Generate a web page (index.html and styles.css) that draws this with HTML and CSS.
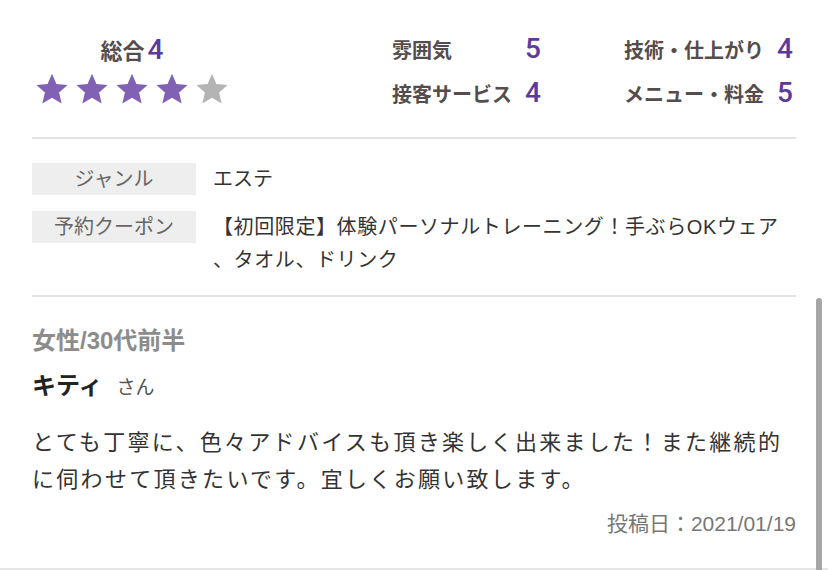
FILE: index.html
```html
<!DOCTYPE html>
<html lang="ja">
<head>
<meta charset="utf-8">
<link rel="stylesheet" href="styles.css">
</head>
<body>
<div class="card">
  <section class="summary">
    <div class="overall">
      <div class="overall-title"><span class="overall-label">総合</span><span class="overall-num">4</span></div>
      <div class="stars">
        <svg class="star on" viewBox="0 0 24 24"><polygon points="12,1.2 15.1,8.5 23,9.2 17,14.4 18.8,22.2 12,18.1 5.2,22.2 7,14.4 1,9.2 8.9,8.5"/></svg>
        <svg class="star on" viewBox="0 0 24 24"><polygon points="12,1.2 15.1,8.5 23,9.2 17,14.4 18.8,22.2 12,18.1 5.2,22.2 7,14.4 1,9.2 8.9,8.5"/></svg>
        <svg class="star on" viewBox="0 0 24 24"><polygon points="12,1.2 15.1,8.5 23,9.2 17,14.4 18.8,22.2 12,18.1 5.2,22.2 7,14.4 1,9.2 8.9,8.5"/></svg>
        <svg class="star on" viewBox="0 0 24 24"><polygon points="12,1.2 15.1,8.5 23,9.2 17,14.4 18.8,22.2 12,18.1 5.2,22.2 7,14.4 1,9.2 8.9,8.5"/></svg>
        <svg class="star off" viewBox="0 0 24 24"><polygon points="12,1.2 15.1,8.5 23,9.2 17,14.4 18.8,22.2 12,18.1 5.2,22.2 7,14.4 1,9.2 8.9,8.5"/></svg>
      </div>
    </div>
    <div class="scores">
      <span class="score-label">雰囲気</span><span class="score-num">5</span>
      <span class="score-label">技術・仕上がり</span><span class="score-num">4</span>
      <span class="score-label">接客サービス</span><span class="score-num">4</span>
      <span class="score-label">メニュー・料金</span><span class="score-num">5</span>
    </div>
  </section>

  <section class="info">
    <div class="info-row">
      <div class="info-label">ジャンル</div>
      <div class="info-value">エステ</div>
    </div>
    <div class="info-row">
      <div class="info-label">予約クーポン</div>
      <div class="info-value coupon">【初回限定】体験パーソナルトレーニング！手ぶらOKウェア<br>、タオル、ドリンク</div>
    </div>
  </section>

  <section class="review">
    <div class="reviewer-meta">女性/30代前半</div>
    <div class="reviewer-name">キティ<span class="honorific">さん</span></div>
    <p class="review-text">とても丁寧に、色々アドバイスも頂き楽しく出来ました！また継続的<br>に伺わせて頂きたいです。宜しくお願い致します。</p>
    <div class="review-date">投稿日：2021/01/19</div>
  </section>
</div>
<div class="scroll-indicator"></div>
</body>
</html>
```

FILE: styles.css
```css
* { box-sizing: border-box; }

html, body {
  margin: 0;
  padding: 0;
  background: #ffffff;
}

body {
  font-family: "Liberation Sans", "Noto Sans CJK JP", sans-serif;
  color: #333333;
  width: 828px;
  height: 570px;
  overflow: hidden;
  position: relative;
}

.card {
  height: 570px;
  border-bottom: 2px solid #e6e6e6;
  padding: 0 32px;
}

/* ---------- summary ---------- */
.summary {
  display: flex;
  height: 139px;
  border-bottom: 2px solid #e2e2e2;
}

.overall {
  width: 200px;
  display: flex;
  flex-direction: column;
  align-items: center;
  padding-top: 35px;
}

.overall-title {
  display: flex;
  align-items: baseline;
  gap: 3px;
  line-height: 30px;
  height: 30px;
}

.overall-label {
  font-size: 22px;
  font-weight: 700;
  color: #554d4d;
}

.overall-num {
  font-family: Roboto, "Liberation Sans", sans-serif;
  font-size: 28px;
  font-weight: 500;
  color: #5c3a9b;
}

.stars {
  display: flex;
  gap: 6px;
  margin-top: 7px;
}

.star {
  width: 34px;
  height: 34px;
  display: block;
}

.star.on { fill: #8061b4; }
.star.off { fill: #b4b4b4; }

.scores {
  margin-left: auto;
  display: grid;
  grid-template-columns: 133px 99px 153px 19px;
  grid-auto-rows: 44px;
  align-items: center;
  padding-top: 27px;
}

.score-label {
  font-size: 20px;
  font-weight: 700;
  color: #554d4d;
}

.score-num {
  font-family: Roboto, "Liberation Sans", sans-serif;
  font-size: 28px;
  font-weight: 500;
  color: #5c3a9b;
  line-height: 1;
}

/* ---------- info ---------- */
.info {
  padding: 24px 0 18px;
  border-bottom: 2px solid #e2e2e2;
  display: flex;
  flex-direction: column;
  gap: 16px;
}

.info-row {
  display: flex;
  align-items: flex-start;
  gap: 17px;
}

.info-label {
  flex: 0 0 164px;
  height: 32px;
  line-height: 32px;
  background: #eeeeee;
  color: #666666;
  font-size: 20px;
  text-align: center;
}

.info-value {
  font-size: 20px;
  line-height: 32px;
  color: #333333;
}

.info-value.coupon {
  line-height: 33px;
  letter-spacing: 0.6px;
}

/* ---------- review ---------- */
.review {
  padding-top: 29px;
}

.reviewer-meta {
  font-size: 24px;
  font-weight: 700;
  color: #8c8c8c;
  line-height: 30px;
}

.reviewer-name {
  margin-top: 15px;
  font-size: 24px;
  font-weight: 700;
  color: #222222;
  line-height: 30px;
}

.honorific {
  font-size: 19px;
  font-weight: 400;
  color: #555555;
  margin-left: 14px;
}

.review-text {
  margin: 21px 0 0;
  font-size: 22px;
  line-height: 37px;
  letter-spacing: 2.3px;
  color: #333333;
}

.review-date {
  margin-top: 13px;
  text-align: right;
  font-size: 21px;
  line-height: 26px;
  color: #777777;
}

/* scroll indicator overlay */
.scroll-indicator {
  position: absolute;
  left: 816px;
  top: 298px;
  width: 6px;
  height: 280px;
  background: #a6a6a6;
  border-radius: 3px;
}
```
